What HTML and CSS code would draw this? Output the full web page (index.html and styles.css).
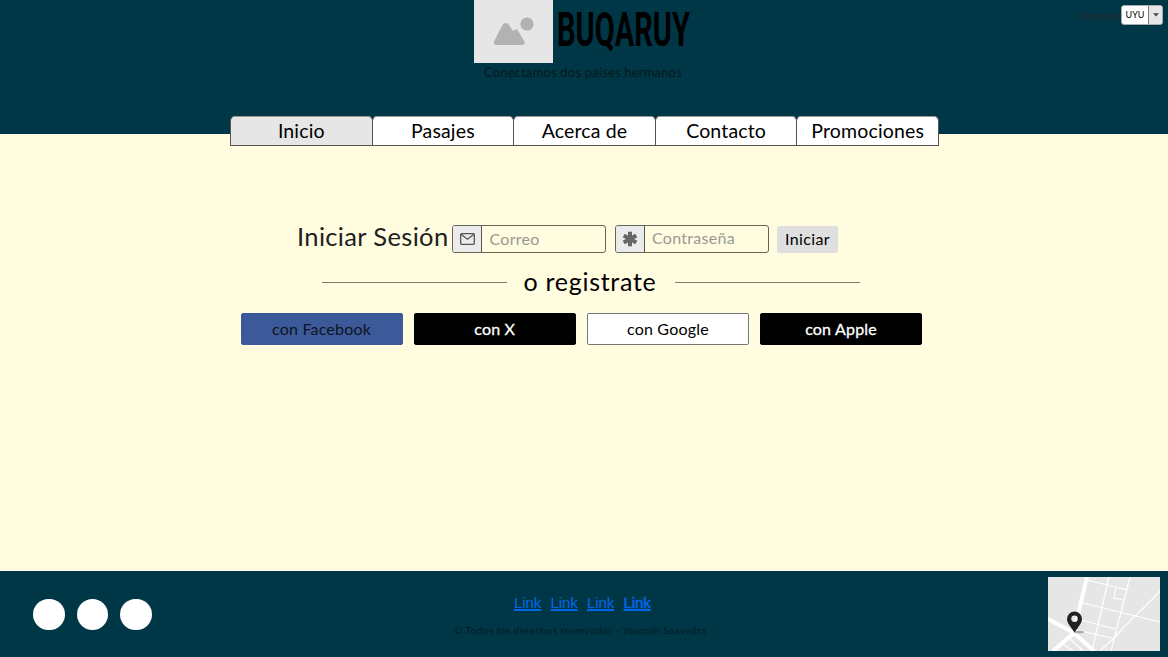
FILE: index.html
```html
<!DOCTYPE html>
<html lang="es">
<head>
<meta charset="utf-8">
<title>BUQARUY</title>
<link rel="stylesheet" href="styles.css">
</head>
<body>
<header class="header">
  <div class="brand">
    <svg class="logo" viewBox="0 0 79 63"><rect width="79" height="63" fill="#e6e6e6"/><path d="M22 45q-3-.5-2-3.500l8.500-16.500q3-4 6.500 0l4 6.300 1.300-1.200q1.800-1.600 3.400.2l6.700 11.200q1.200 3-1.900 3.500z" fill="#b2b2b2"/><circle cx="53" cy="24" r="6.600" fill="#b2b2b2"/></svg>
    <h1 class="title"><span class="title-text">BUQARUY</span></h1>
  </div>
  <p class="tagline">Conectamos dos países hermanos</p>
  <nav class="tabs">
    <a class="tab active">Inicio</a>
    <a class="tab">Pasajes</a>
    <a class="tab">Acerca de</a>
    <a class="tab">Contacto</a>
    <a class="tab">Promociones</a>
  </nav>
  <div class="currency">
    <span class="currency-label">Moneda</span>
    <div class="select"><span class="value">UYU</span><span class="arrow"><svg width="6" height="4" viewBox="0 0 6 4"><path d="M0 .3h6L3 3.600z" fill="#444"/></svg></span></div>
  </div>
</header>
<main class="main">
  <form class="login">
    <h2 class="login-title">Iniciar Sesión</h2>
    <div class="field">
      <span class="addon"><svg width="15" height="12" viewBox="0 0 15 12" fill="none" stroke="#555" stroke-width="1.300"><rect x=".65" y=".65" width="13.700" height="10.700" rx="1"/><path d="M1 1.300l6.500 5 6.500-5"/></svg></span>
      <span class="placeholder">Correo</span>
    </div>
    <div class="field second">
      <span class="addon"><svg width="16" height="16" viewBox="-8 -8 16 16" stroke="#666" stroke-width="4"><path d="M0-7.300v14.600M-6.300-3.600l12.600 7.200M-6.300 3.600l12.600-7.200"/></svg></span>
      <span class="placeholder contra">Contraseña</span>
    </div>
    <span class="submit">Iniciar</span>
  </form>
  <div class="divider"><span class="line"></span><span class="divider-text">o registrate</span><span class="line"></span></div>
  <div class="social">
    <span class="btn facebook">con Facebook</span>
    <span class="btn dark">con X</span>
    <span class="btn google">con Google</span>
    <span class="btn dark">con Apple</span>
  </div>
</main>
<footer class="footer">
  <div class="dots"><i class="dot"></i><i class="dot"></i><i class="dot"></i></div>
  <div class="foot-center">
    <div class="links"><a>Link</a><a>Link</a><a>Link</a><a class="strong">Link</a></div>
    <p class="copy">© Todos los derechos reservados - Joaquín Saavedra</p>
  </div>
  <svg class="map" viewBox="0 0 112 74">
    <rect width="112" height="74" fill="#e6e6e6"/>
    <g fill="none" stroke="#fff">
      <path d="M39 0L28 46L24 58M0 42L26 56L46 74M26 56L5 74" stroke-width="4"/>
      <path d="M39 3L79 13M35 26L112 45M33 43L67 52M28 53L64 61M61 0L44 74M82 0L63 74M68 11l-2 10 9 2M112 14C92 36 84 40 68 59L52 74M22 62l13 12M15 67l10 7" stroke-width="1.200"/>
    </g>
    <ellipse cx="31" cy="55" rx="5" ry="1.300" fill="#aaa"/>
    <path fill-rule="evenodd" d="M26.500 34.500a7.500 7.500 0 0 1 7.500 7.500c0 4.500-4.500 8.500-7.500 13.500-3-5-7.500-9-7.500-13.500a7.500 7.500 0 0 1 7.500-7.500zm0 4a3.200 3.200 0 1 0 0 6.400 3.200 3.200 0 0 0 0-6.400z" fill="#222"/>
  </svg>
</footer>
</body>
</html>
```
FILE: styles.css
```css
* { box-sizing: border-box; }
body { margin: 0; width: 1168px; height: 657px; overflow: hidden; display: flex; flex-direction: column; background: #fffcdf; color: #000; font-family: Lato, "Liberation Sans", sans-serif; }
h1, h2, p { margin: 0; font-weight: 400; }
span, a, p, h2 { white-space: nowrap; }
.header { height: 134px; background: #003747; position: relative; flex: none; }
.brand { display: flex; margin-left: 474px; height: 63px; }
.logo { width: 79px; height: 63px; flex: none; }
.title { width: 140px; margin-left: 4px; font: 700 48px/60px Roboto, sans-serif; }
.title-text { display: inline-block; transform: scaleX(.605); transform-origin: 0 0; }
.tagline { margin-left: 484px; font-size: 13px; line-height: 18px; letter-spacing: .18px; color: #06171c; }
.tabs { display: flex; width: 709px; margin: 35px 0 0 230px; }
.tab { flex: 1; height: 29.500px; margin-right: -1px; border: 1px solid #555; border-top-color: #999; border-radius: 5px 5px 0 0; background: #fff; text-align: center; font-size: 19.500px; line-height: 28px; letter-spacing: .15px; }
.tab:last-child { margin-right: 0; }
.active { background: #e6e6e6; }
.currency { position: absolute; top: 5px; right: 5px; display: flex; align-items: center; }
.currency-label { font-size: 11px; letter-spacing: .4px; color: #25282a; margin-right: 1px; }
.select { display: flex; width: 42px; height: 20px; border: 1px solid #aaa; border-radius: 3px; background: #fff; overflow: hidden; line-height: 17px; }
.value { width: 26px; text-align: center; font-size: 9px; }
.arrow { flex: 1; background: #e6e6e6; border-left: 1px solid #777; display: flex; align-items: center; justify-content: center; }
.main { height: 437px; flex: none; padding-top: 91px; }
.login { display: flex; margin-left: 297px; height: 28px; }
.login-title { width: 155px; font-size: 25.500px; line-height: 23px; letter-spacing: .35px; color: #202020; }
.field { width: 154px; height: 27.500px; display: flex; border: 1px solid #666657; border-radius: 3px; overflow: hidden; }
.second { margin-left: 8.500px; }
.addon { width: 29px; background: #ebebeb; border-right: 1px solid #555; display: flex; align-items: center; justify-content: center; }
.placeholder { margin-left: 7.500px; font-size: 16px; line-height: 26px; letter-spacing: .3px; color: #999993; }
.contra { line-height: 24px; }
.submit { width: 61px; height: 27px; margin: 1px 0 0 8.500px; background: #dfdfdf; border-radius: 2px; text-align: center; font-size: 16px; line-height: 25px; letter-spacing: .35px; }
.divider { display: flex; align-items: center; width: 538px; height: 34px; margin: 12px 0 0 322px; }
.line { width: 185px; height: 1px; background: #7d7d68; }
.divider-text { flex: 1; text-align: center; font-size: 25px; line-height: 34px; letter-spacing: .7px; margin: -2px 2px 0 0; }
.social { display: flex; gap: 11.200px; margin: 14px 0 0 240.500px; }
.btn { width: 162px; height: 31.500px; border: 1px solid #777; border-radius: 2px; text-align: center; font-size: 16px; line-height: 29px; letter-spacing: .2px; }
.facebook { background: #3c5a99; border-color: #3c5a99; color: #0c1321; }
.dark { background: #000; border-color: #000; color: #fff; -webkit-text-stroke: .3px #fff; }
.google { background: #fff; }
.footer { height: 86px; flex: none; background: #003747; display: flex; }
.dots { display: flex; gap: 12px; margin: 27.500px 0 0 33px; width: 421px; }
.dot { width: 31.500px; height: 31.500px; border-radius: 50%; background: #fff; }
.foot-center { width: 253px; padding-top: 23px; }
.links { display: flex; gap: 9.400px; margin-left: 60px; font: 15px/17px "Liberation Sans", sans-serif; letter-spacing: -.1px; color: #0068e8; }
.links a { text-decoration: underline; text-decoration-thickness: 2px; text-underline-offset: 1px; }
.strong { -webkit-text-stroke: .5px #0068e8; }
.copy { margin-top: 12px; font-size: 10px; line-height: 14px; letter-spacing: .48px; color: #031a21; }
.map { width: 112px; height: 74px; margin: 6px 0 0 341px; }
```
